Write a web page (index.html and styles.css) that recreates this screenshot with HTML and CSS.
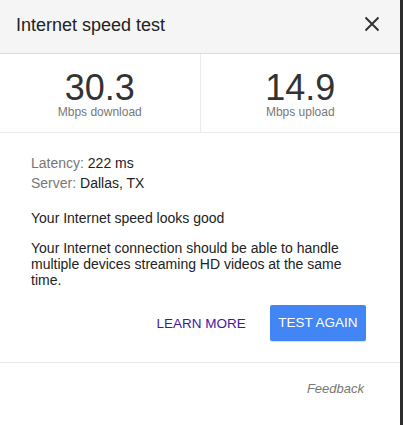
FILE: index.html
```html
<!DOCTYPE html>
<html>
<head>
<meta charset="utf-8">
<link rel="stylesheet" href="styles.css">
</head>
<body>
<div class="panel">
  <div class="header">
    <div class="title">Internet speed test</div>
    <svg class="close" width="16" height="16" viewBox="0 0 16 16"><path d="M1.5 1.5 L14.5 14.5 M14.5 1.5 L1.5 14.5" stroke="#333" stroke-width="2" fill="none"/></svg>
  </div>
  <div class="stats">
    <div class="stat">
      <div class="num">30.3</div>
      <div class="unit">Mbps download</div>
    </div>
    <div class="stat">
      <div class="num">14.9</div>
      <div class="unit">Mbps upload</div>
    </div>
  </div>
  <div class="body">
    <div class="meta"><span class="label">Latency:</span> 222 ms</div>
    <div class="meta"><span class="label">Server:</span> Dallas, TX</div>
    <p class="verdict">Your Internet speed looks good</p>
    <p class="desc">Your Internet connection should be able to handle multiple devices streaming HD videos at the same time.</p>
    <div class="actions">
      <span class="learn">LEARN MORE</span>
      <span class="again">TEST AGAIN</span>
    </div>
  </div>
  <div class="footer">
    <span class="feedback">Feedback</span>
  </div>
</div>
</body>
</html>
```
FILE: styles.css
```css
html, body {
  margin: 0;
  padding: 0;
}
body {
  background: #2d2d2d;
  font-family: Arial, "Liberation Sans", sans-serif;
  width: 403px;
  height: 425px;
  overflow: hidden;
}
.panel {
  width: 400px;
  height: 425px;
  background: #fff;
}
.header {
  height: 53px;
  background: #f5f5f5;
  border-bottom: 1px solid #dadada;
  display: flex;
  align-items: center;
  justify-content: space-between;
  padding: 0 20px 0 16px;
  box-sizing: content-box;
}
.title {
  font-size: 18px;
  color: #222;
  margin-top: -2px;
}
.close {
  margin-top: -6px;
}
.stats {
  display: flex;
  height: 78px;
  border-bottom: 1px solid #ebebeb;
}
.stat {
  flex: 1;
  text-align: center;
  padding-top: 14px;
}
.stat:first-child {
  border-right: 1px solid #ebebeb;
}
.num {
  font-size: 36px;
  line-height: 40px;
  color: #333;
}
.unit {
  font-size: 12px;
  color: #777;
  line-height: 8px;
}
.body {
  padding: 20px 34px 0 31px;
  font-size: 14px;
  color: #222;
}
.meta {
  line-height: 20px;
}
.label {
  color: #777;
}
.verdict {
  margin: 15px 0 0;
  line-height: 20px;
}
.desc {
  margin: 12px 0 0;
  line-height: 16px;
}
.actions {
  display: flex;
  justify-content: flex-end;
  align-items: center;
  margin-top: 17px;
  height: 36px;
}
.learn {
  font-size: 13.5px;
  color: #42189e;
  margin-right: 24px;
}
.again {
  background: #4285f4;
  color: #fff;
  font-size: 13.5px;
  height: 36px;
  line-height: 36px;
  padding: 0 8.5px;
  border-radius: 2px;
  box-shadow: 0 1px 1px rgba(0,0,0,0.15);
}
.footer {
  margin-top: 21px;
  border-top: 1px solid #ebebeb;
  text-align: right;
  padding: 16px 36px 0 0;
}
.feedback {
  font-size: 13px;
  font-style: italic;
  color: #777;
}
```
